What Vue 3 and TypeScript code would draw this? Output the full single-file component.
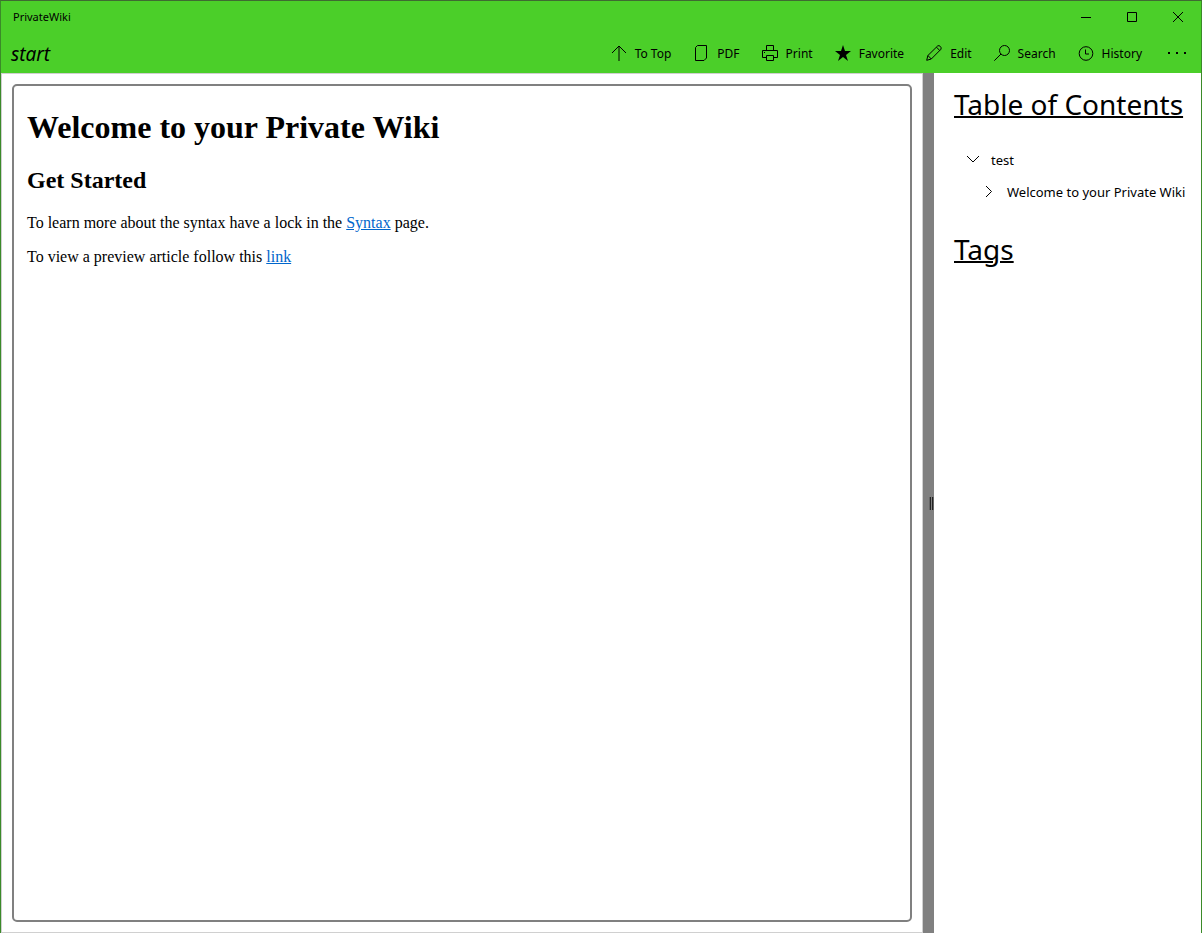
<script setup lang="ts">
import { ref } from 'vue'

interface Command {
  id: string
  label: string
}

const commands: Command[] = [
  { id: 'top', label: 'To Top' },
  { id: 'pdf', label: 'PDF' },
  { id: 'print', label: 'Print' },
  { id: 'favorite', label: 'Favorite' },
  { id: 'edit', label: 'Edit' },
  { id: 'search', label: 'Search' },
  { id: 'history', label: 'History' },
]

const expanded = ref(true)
</script>

<template>
  <div class="window">
    <header class="header">
      <div class="titlebar">
        <span class="app-name">PrivateWiki</span>
        <div class="window-controls">
          <button type="button" aria-label="Minimize">
            <svg viewBox="0 0 12 12"><path d="M1 6.5h10" /></svg>
          </button>
          <button type="button" aria-label="Maximize">
            <svg viewBox="0 0 12 12"><path d="M1.5 1.5h9v9h-9z" /></svg>
          </button>
          <button type="button" aria-label="Close">
            <svg viewBox="0 0 12 12"><path d="M1 1l10 10M11 1L1 11" /></svg>
          </button>
        </div>
      </div>
      <div class="commandbar">
        <span class="page-name">start</span>
        <nav class="commands" aria-label="Page commands">
          <button v-for="command in commands" :key="command.id" type="button" class="command">
            <svg viewBox="0 0 16 16" aria-hidden="true">
              <path v-if="command.id === 'top'" d="M8 16V1M1 8l7-7 7 7" />
              <path v-else-if="command.id === 'pdf'" d="M4.500 .5h9v12.500l-2.500 2.500H2.500V2.500z" />
              <template v-else-if="command.id === 'print'">
                <path d="M4.500 5.500v-5h7v5M4.500 12.500h-4v-7h15v7h-4M4.500 10.500h7v5h-7z" />
                <path d="M2 7.500h1" />
              </template>
              <path
                v-else-if="command.id === 'favorite'"
                class="solid"
                d="M8 0l2 6h6l-5 4 2 6-5-4-5 4 2-6-5-4h6z"
              />
              <path
                v-else-if="command.id === 'edit'"
                d="M.7 15.300l1.200-4.800L11.700.9q1.300-.8 2.600.5t.7 2.800L5.300 14zM1.900 10.500l3.400 3.500M10.500 2.200l3.300 3.400"
              />
              <template v-else-if="command.id === 'search'">
                <circle cx="10.500" cy="5.500" r="5" />
                <path d="M7 9L.3 15.700" />
              </template>
              <template v-else>
                <circle cx="8" cy="8.500" r="6.800" />
                <path d="M7.500 4.500v4.500H11" />
              </template>
            </svg>
            <span>{{ command.label }}</span>
          </button>
          <button type="button" class="more" aria-label="More commands">
            <svg viewBox="0 0 18 4"><path class="solid" d="M0 1h2v2H0zM8 1h2v2H8zM16 1h2v2h-2z" /></svg>
          </button>
        </nav>
      </div>
    </header>

    <div class="body">
      <main class="page">
        <article class="document">
          <h1>Welcome to your Private Wiki</h1>
          <h2>Get Started</h2>
          <p>To learn more about the syntax have a lock in the <a href="#syntax">Syntax</a> page.</p>
          <p>To view a preview article follow this <a href="#preview">link</a></p>
        </article>
      </main>

      <div class="splitter" role="separator" aria-orientation="vertical">
        <span class="grip"></span>
      </div>

      <aside class="sidebar">
        <h2>Table of Contents</h2>
        <ul class="tree">
          <li>
            <button type="button" class="node" :aria-expanded="expanded" @click="expanded = !expanded">
              <svg viewBox="0 0 12 12" aria-hidden="true">
                <path :d="expanded ? 'M0 2l6 6 6-6' : 'M3 0l6 6-6 6'" />
              </svg>
              <span>test</span>
            </button>
            <ul v-if="expanded">
              <li>
                <button type="button" class="node child" aria-expanded="false">
                  <svg viewBox="0 0 12 12" aria-hidden="true"><path d="M3 0l5.500 5.500L3 11" /></svg>
                  <span>Welcome to your Private Wiki</span>
                </button>
              </li>
            </ul>
          </li>
        </ul>
        <h2>Tags</h2>
      </aside>
    </div>
  </div>
</template>

<style>
body {
  margin: 0;
}
</style>

<style scoped>
.window {
  box-sizing: border-box;
  display: flex;
  flex-direction: column;
  min-height: 100vh;
  border: 1px solid #3b8a29;
  border-top-color: #3f6b32;
  border-bottom: 0;
  background: #fff;
  color: #000;
  font-family: "Segoe UI", "Noto Sans", "Open Sans", sans-serif;
}

button {
  display: flex;
  align-items: center;
  margin: 0;
  padding: 0;
  border: 0;
  background: none;
  color: inherit;
  font: inherit;
}

svg {
  flex: none;
  fill: none;
  stroke: #000;
  stroke-width: 1;
}

.solid {
  fill: #000;
  stroke: none;
}

.header {
  background: #4bcf29;
}

.titlebar,
.commandbar {
  display: flex;
  justify-content: space-between;
}

.titlebar {
  height: 32px;
  padding-left: 12px;
}

.app-name {
  font-size: 11px;
  line-height: 32px;
}

.window-controls {
  display: flex;
}

.window-controls button {
  justify-content: center;
  width: 46px;
}

.window-controls svg {
  width: 12px;
  height: 12px;
}

.commandbar {
  height: 40px;
  padding-left: 10px;
}

.page-name {
  font-size: 19px;
  font-style: italic;
  line-height: 42px;
}

.commands {
  display: flex;
}

.command {
  gap: 8px;
  padding: 0 11px;
  font-size: 12px;
  white-space: nowrap;
}

.command svg {
  width: 16px;
  height: 16px;
}

.more {
  justify-content: center;
  width: 48px;
}

.more svg {
  width: 18px;
  height: 4px;
}

.body {
  display: flex;
  flex: 1;
}

.page {
  display: flex;
  flex: 1;
  min-width: 0;
  padding: 10px;
  border: 1px solid #d0d0d0;
}

.document {
  flex: 1;
  min-width: 0;
  padding: 0 13px;
  border: 2px solid #808080;
  border-radius: 5px;
  font-family: "Liberation Serif", "Times New Roman", serif;
  font-size: 16px;
  line-height: 18px;
}

.document h1 {
  margin: 23px 0 0;
  font-size: 32px;
  line-height: 37px;
}

.document h2 {
  margin: 21px 0 0;
  font-size: 24px;
  line-height: 27px;
}

.document p {
  margin: 16px 0 0;
}

.document h2 + p {
  margin-top: 20px;
}

.document a {
  color: #0066cc;
}

.splitter {
  display: flex;
  align-items: center;
  justify-content: flex-end;
  width: 11px;
  background: #808080;
}

.grip {
  width: 1px;
  height: 13px;
  padding: 0 1px;
  background: linear-gradient(#808080, #808080) content-box, #222;
  background-clip: content-box, border-box;
  border: solid #666;
  border-width: 0 1px;
}

.sidebar {
  width: 247px;
  padding-left: 20px;
}

.sidebar h2 {
  margin: 0;
  padding-top: 11px;
  font-size: 28px;
  font-weight: 400;
  line-height: 40px;
  text-decoration: underline;
  text-decoration-thickness: 2px;
  white-space: nowrap;
}

.tree,
.tree ul {
  margin: 0;
  padding: 0;
  list-style: none;
}

.tree {
  padding: 20px 0 10px;
}

.node {
  gap: 12px;
  height: 32px;
  padding-left: 13px;
  font-size: 13px;
  white-space: nowrap;
}

.node.child {
  padding-left: 29px;
}

.node svg {
  width: 12px;
  height: 12px;
}
</style>
